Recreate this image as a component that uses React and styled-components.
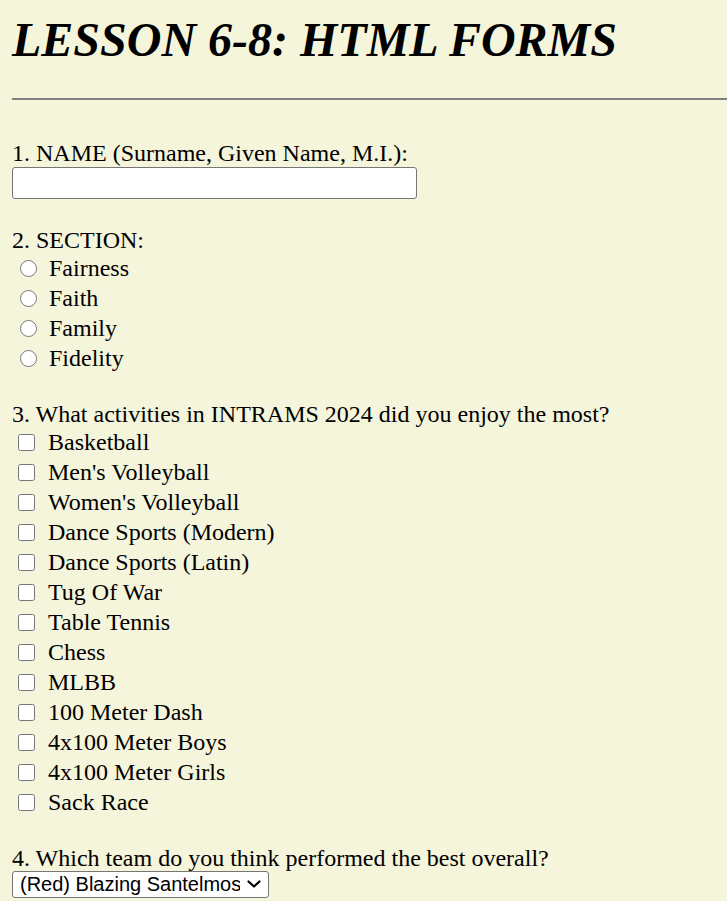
import React from "react";
import styled, { createGlobalStyle } from "styled-components";

const GlobalStyle = createGlobalStyle`
  html, body {
    margin: 0;
    padding: 0;
    background: #f5f5dc;
  }
  body {
    font-family: "Liberation Serif", "Times New Roman", serif;
    color: #000;
  }
`;

const sections = ["Fairness", "Faith", "Family", "Fidelity"];

const activities = [
  "Basketball",
  "Men's Volleyball",
  "Women's Volleyball",
  "Dance Sports (Modern)",
  "Dance Sports (Latin)",
  "Tug Of War",
  "Table Tennis",
  "Chess",
  "MLBB",
  "100 Meter Dash",
  "4x100 Meter Boys",
  "4x100 Meter Girls",
  "Sack Race",
];

export default function App() {
  return (
    <Page>
      <GlobalStyle />
      <Title>LESSON 6-8: HTML FORMS</Title>
      <Rule />
      <Form>
        <Question>
          <Label htmlFor="name">1. NAME (Surname, Given Name, M.I.):</Label>
          <TextInput id="name" type="text" />
        </Question>

        <Question>
          <Label>2. SECTION:</Label>
          {sections.map((s) => (
            <Option key={s}>
              <Radio type="radio" name="section" value={s} />
              <span>{s}</span>
            </Option>
          ))}
        </Question>

        <Question>
          <Label>3. What activities in INTRAMS 2024 did you enjoy the most?</Label>
          {activities.map((a) => (
            <Option key={a}>
              <Check type="checkbox" value={a} />
              <span>{a}</span>
            </Option>
          ))}
        </Question>

        <Question>
          <Label htmlFor="team">4. Which team do you think performed the best overall?</Label>
          <SelectWrap>
            <Select id="team" defaultValue="red">
              <option value="red">(Red) Blazing Santelmos</option>
            </Select>
            <Chevron viewBox="0 0 14 8" aria-hidden="true">
              <path d="M1.5 1.5 L7 6.5 L12.5 1.5" />
            </Chevron>
          </SelectWrap>
        </Question>
      </Form>
    </Page>
  );
}

const Page = styled.div`
  padding: 12px 0 0 12px;
`;

const Title = styled.h1`
  margin: 0;
  font-size: 48px;
  font-weight: bold;
  font-style: italic;
  line-height: 55px;
`;

const Rule = styled.hr`
  margin: 31px 0 0 0;
  border: none;
  border-top: 2px solid #808080;
`;

const Form = styled.form`
  display: flex;
  flex-direction: column;
  gap: 28px;
  padding-top: 40px;
`;

const Question = styled.div`
  display: flex;
  flex-direction: column;
  align-items: flex-start;
  font-size: 24px;
`;

const Label = styled.label`
  line-height: 26px;
`;

const TextInput = styled.input`
  box-sizing: border-box;
  width: 405px;
  height: 32px;
  margin: 1px 0 0 0;
  border: 1px solid #767676;
  border-radius: 3px;
  background: #fff;
`;

const Option = styled.label`
  display: flex;
  align-items: center;
  height: 30px;
  line-height: 30px;
`;

const Radio = styled.input`
  width: 17px;
  height: 17px;
  margin: 0 12px 0 8px;
`;

const Check = styled.input`
  width: 17px;
  height: 17px;
  margin: 0 13px 0 6px;
`;

const SelectWrap = styled.div`
  position: relative;
  display: inline-flex;
`;

const Select = styled.select`
  appearance: none;
  -webkit-appearance: none;
  box-sizing: border-box;
  width: 257px;
  height: 27px;
  margin: 0;
  padding: 0 28px 0 7px;
  font-family: "Liberation Sans", Arial, sans-serif;
  font-size: 20px;
  line-height: 25px;
  color: #000;
  background: #fff;
  border: 1px solid #767676;
  border-radius: 3px;
`;

const Chevron = styled.svg`
  position: absolute;
  left: 235px;
  top: 9px;
  width: 14px;
  height: 8px;
  fill: none;
  stroke: #000;
  stroke-width: 2.2;
  stroke-linecap: round;
  stroke-linejoin: round;
  pointer-events: none;
`;
